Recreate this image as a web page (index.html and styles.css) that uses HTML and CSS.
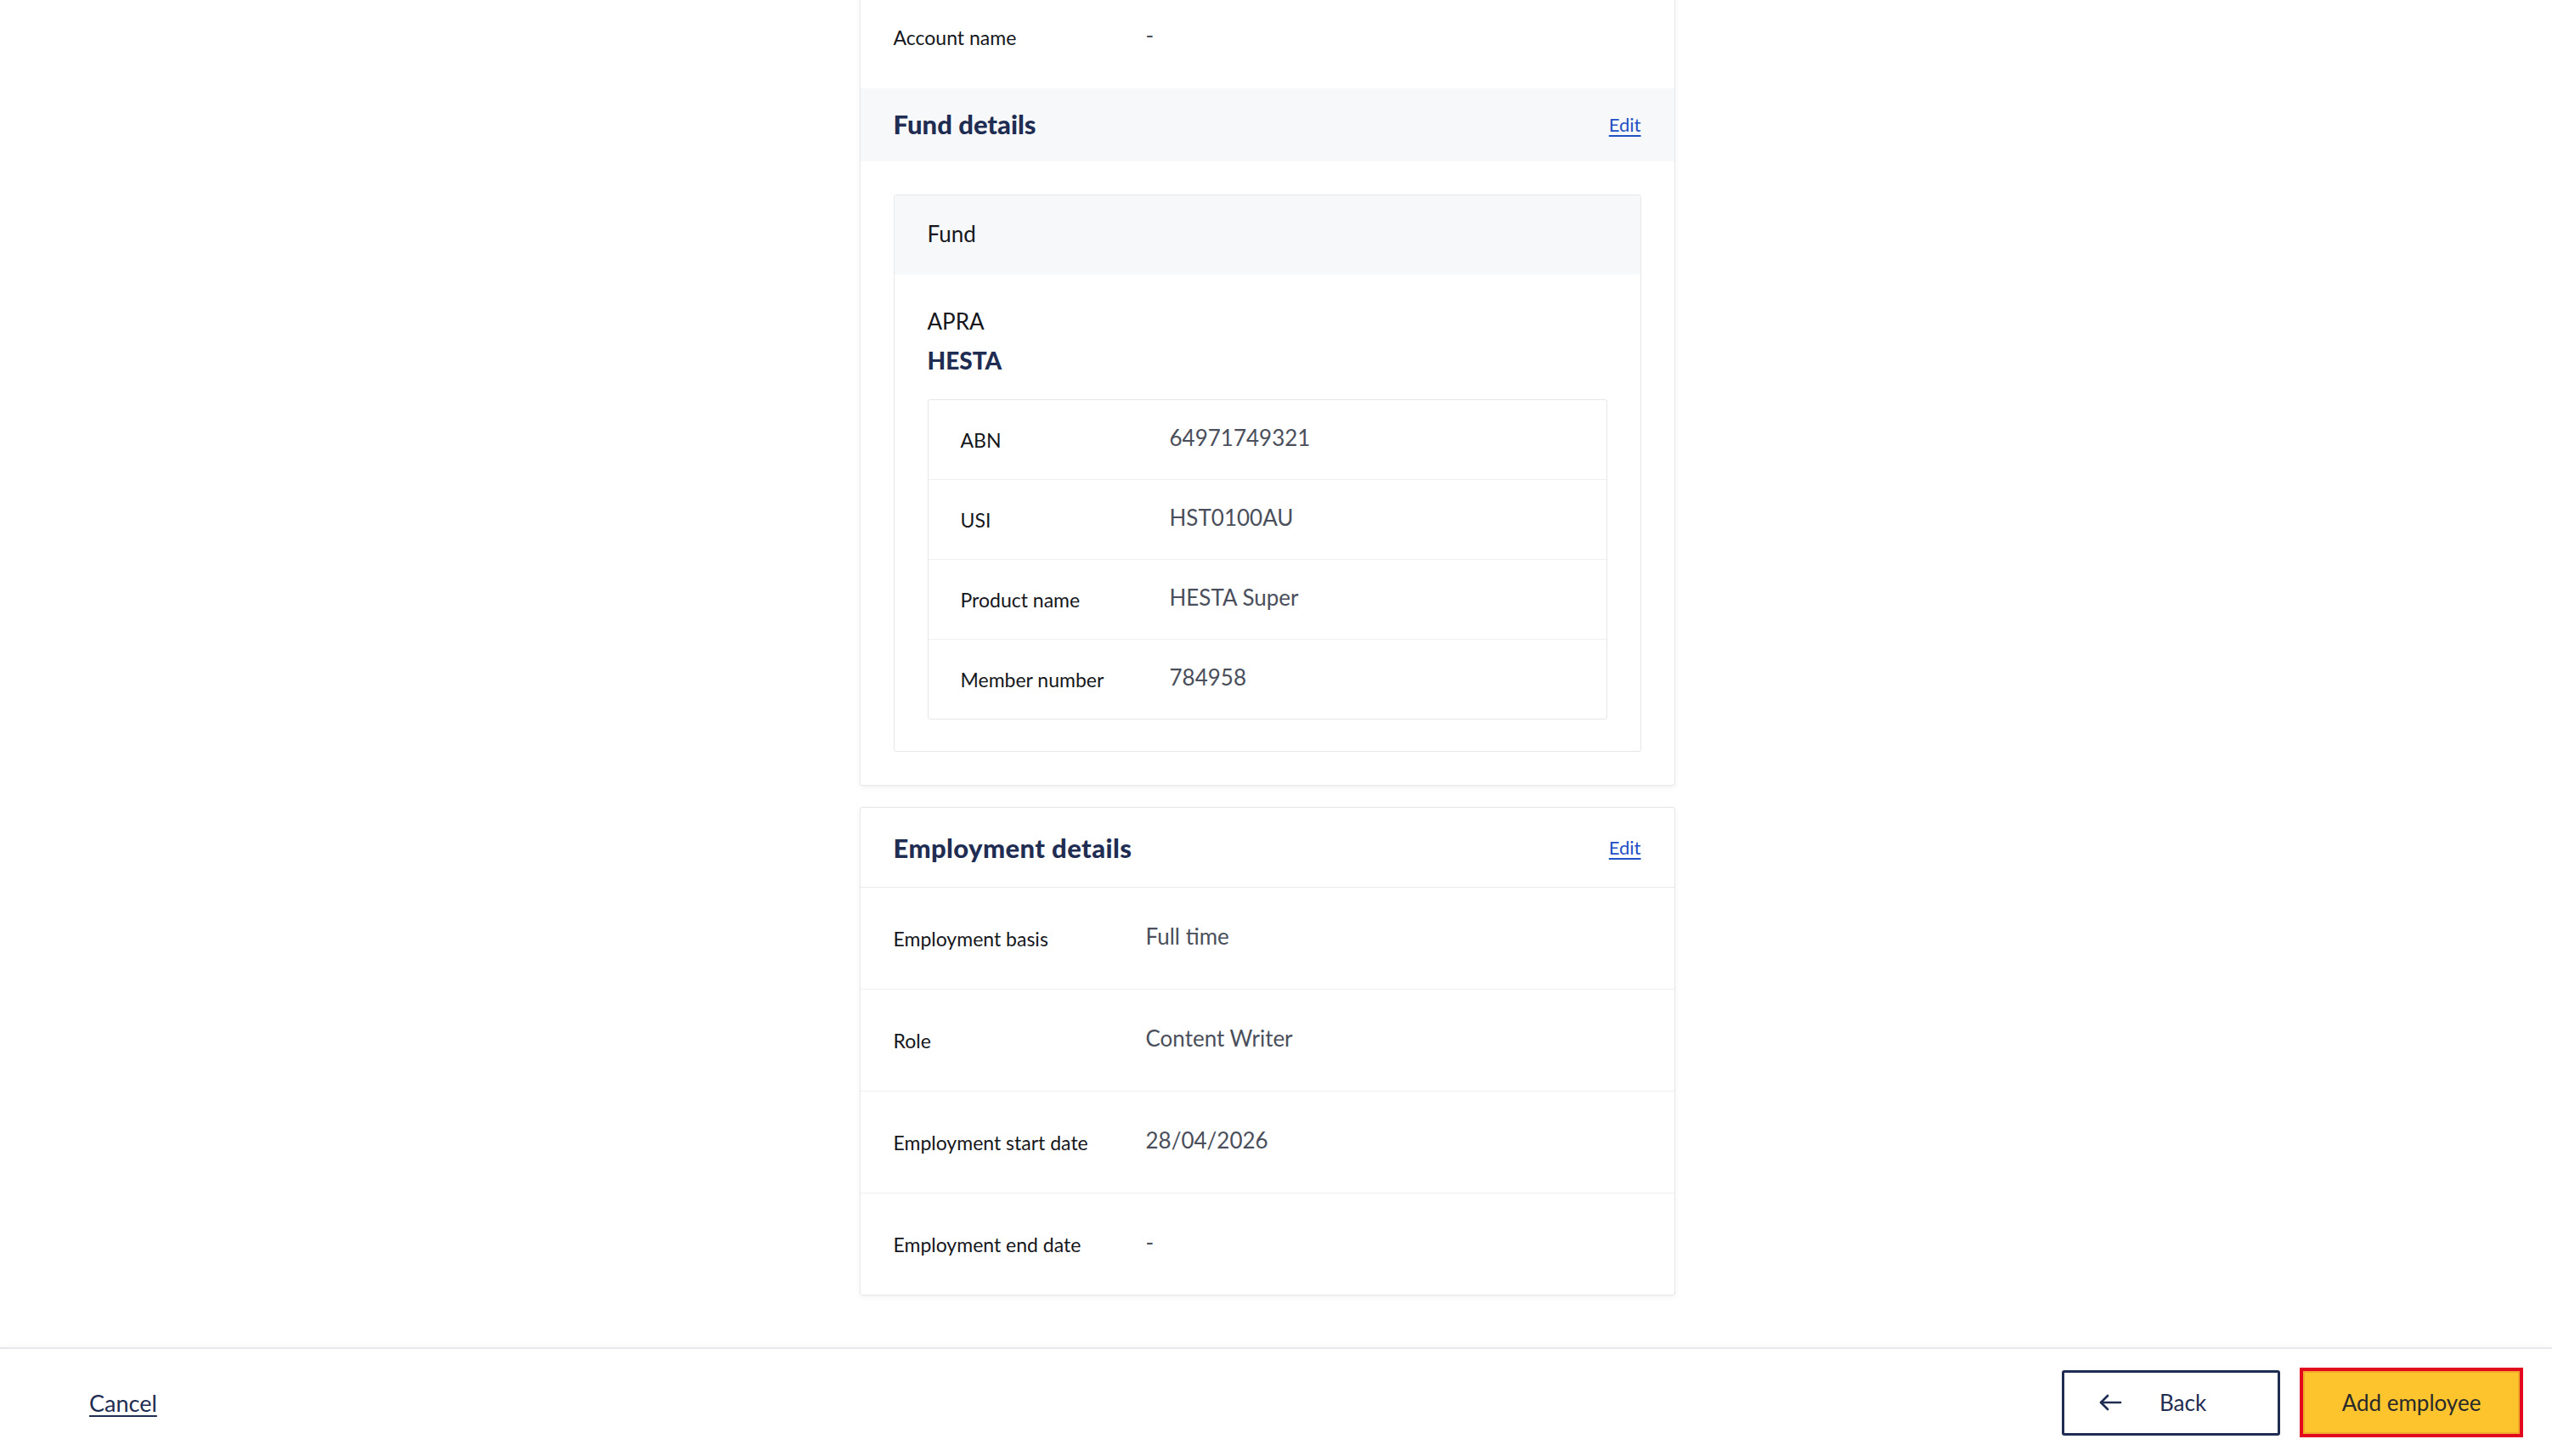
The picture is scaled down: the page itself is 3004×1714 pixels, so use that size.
FILE: index.html
```html
<!DOCTYPE html>
<html lang="en">
<head>
<meta charset="utf-8">
<title>Review employee</title>
<link rel="stylesheet" href="styles.css">
</head>
<body>
<div class="page">
  <main class="main">
    <div class="content">
      <section class="card card-first">
        <div class="row">
          <div class="label">Account name</div>
          <div class="value">-</div>
        </div>
        <div class="section-head shaded">
          <h2 class="title">Fund details</h2>
          <a class="edit" href="#">Edit</a>
        </div>
        <div class="card-body">
          <div class="fund">
            <div class="fund-head">Fund</div>
            <div class="fund-body">
              <div class="fund-type">APRA</div>
              <div class="fund-name">HESTA</div>
              <div class="fund-table">
                <div class="trow"><div class="tlabel">ABN</div><div class="tvalue">64971749321</div></div>
                <div class="trow"><div class="tlabel">USI</div><div class="tvalue">HST0100AU</div></div>
                <div class="trow"><div class="tlabel">Product name</div><div class="tvalue">HESTA Super</div></div>
                <div class="trow"><div class="tlabel">Member number</div><div class="tvalue">784958</div></div>
              </div>
            </div>
          </div>
        </div>
      </section>

      <section class="card card-second">
        <div class="section-head bordered">
          <h2 class="title">Employment details</h2>
          <a class="edit" href="#">Edit</a>
        </div>
        <div class="row row-line">
          <div class="label">Employment basis</div>
          <div class="value">Full time</div>
        </div>
        <div class="row row-line">
          <div class="label">Role</div>
          <div class="value">Content Writer</div>
        </div>
        <div class="row row-line">
          <div class="label">Employment start date</div>
          <div class="value">28/04/2026</div>
        </div>
        <div class="row row-line last">
          <div class="label">Employment end date</div>
          <div class="value">-</div>
        </div>
      </section>
    </div>
  </main>
  <footer class="footer">
    <a class="cancel" href="#">Cancel</a>
    <div class="actions">
      <button class="btn btn-back" type="button">
        <svg class="arrow" width="28" height="22" viewBox="0 0 28 22" fill="none" stroke="#1f2d52" stroke-width="2.6" stroke-linecap="round" stroke-linejoin="round"><path d="M26 11H3"/><path d="M11 3L3 11l8 8"/></svg>
        <span>Back</span>
      </button>
      <button class="btn btn-primary" type="button">Add employee</button>
    </div>
  </footer>
</div>
</body>
</html>
```

FILE: styles.css
```css
html, body {
  margin: 0;
  padding: 0;
  background: #ffffff;
}

body {
  font-family: Lato, "Open Sans", "Liberation Sans", sans-serif;
  color: #1d1f24;
}

.page {
  height: 1714px;
  display: flex;
  flex-direction: column;
  overflow: hidden;
}

.main {
  flex: 1;
  min-height: 0;
  overflow: hidden;
  padding-right: 21px;
}

.content {
  width: 960px;
  margin: -17px auto 0;
}

.card {
  box-sizing: border-box;
  width: 960px;
  background: #fff;
  border: 1px solid #e6e7ea;
  border-radius: 3px;
  box-shadow: 0 2px 6px rgba(0, 0, 0, 0.06);
}

.card-second {
  margin-top: 25px;
}

.row {
  box-sizing: border-box;
  height: 120px;
  display: flex;
  align-items: center;
  padding: 0 39px;
}

.row-line {
  height: 120px;
  border-bottom: 1px solid #eeeff1;
}

.row-line.last {
  border-bottom: none;
  height: 119px;
}

.label {
  width: 297px;
  flex: none;
  font-size: 23px;
  color: #15171c;
}

.value {
  font-size: 26px;
  color: #4a4f5b;
  margin-bottom: 6px;
}

.section-head {
  box-sizing: border-box;
  display: flex;
  align-items: center;
  justify-content: space-between;
  padding: 0 39px;
}

.section-head.shaded {
  height: 86px;
  background: #f7f8fa;
  padding-bottom: 2px;
}

.section-head.bordered {
  height: 94px;
  border-bottom: 1px solid #e8e9ec;
}

.title {
  margin: 0;
  font-size: 31px;
  font-weight: 900;
  color: #1f2d52;
}

.card-second .title {
  letter-spacing: 0.4px;
}

.edit {
  font-size: 22px;
  color: #2350c4;
  text-decoration: underline;
  text-underline-offset: 4px;
  text-decoration-thickness: 2px;
}

.card-body {
  padding: 39px 39px 39px;
}

.fund {
  border: 1px solid #e6e7ea;
  border-radius: 3px;
}

.fund-head {
  box-sizing: border-box;
  height: 93px;
  display: flex;
  align-items: center;
  padding: 0 39px 4px;
  background: #f7f8fa;
  font-size: 26px;
  color: #15171c;
}

.fund-body {
  padding: 32px 39px 37px;
}

.fund-type {
  height: 46px;
  line-height: 46px;
  font-size: 26px;
  color: #15171c;
}

.fund-name {
  height: 46px;
  line-height: 46px;
  font-size: 28px;
  font-weight: 900;
  color: #1f2d52;
  margin-bottom: 23px;
}

.fund-table {
  border: 1px solid #e6e7ea;
  border-radius: 3px;
}

.trow {
  box-sizing: border-box;
  height: 94px;
  display: flex;
  align-items: center;
  padding: 0 38px;
  border-bottom: 1px solid #eeeff1;
}

.trow:last-child {
  border-bottom: none;
  height: 93px;
}

.tlabel {
  width: 246px;
  flex: none;
  font-size: 23px;
  color: #15171c;
}

.tvalue {
  font-size: 26px;
  color: #4a4f5b;
  margin-bottom: 6px;
}

.footer {
  box-sizing: border-box;
  height: 128px;
  flex: none;
  border-top: 2px solid #e6e7ea;
  box-shadow: 0 -2px 6px rgba(0, 0, 0, 0.03);
  display: flex;
  align-items: center;
  justify-content: space-between;
  padding: 0 38px 0 105px;
  background: #fff;
}

.cancel {
  font-size: 27px;
  color: #1f2d52;
  text-decoration: underline;
  text-underline-offset: 4px;
  text-decoration-thickness: 2px;
}

.actions {
  display: flex;
  align-items: center;
  gap: 27px;
}

.btn {
  box-sizing: border-box;
  height: 77px;
  font-family: inherit;
  font-size: 26px;
  border-radius: 3px;
  display: flex;
  align-items: center;
  cursor: pointer;
}

.btn-back {
  width: 257px;
  background: #fff;
  border: 3px solid #1f2d52;
  color: #1f2d52;
  justify-content: flex-start;
  gap: 44px;
  padding: 0 0 0 40px;
}

.arrow {
  display: block;
}

.btn-primary {
  width: 255px;
  height: 74px;
  justify-content: center;
  background: #fdc42d;
  border: 2px solid #f1a92a;
  border-radius: 0;
  color: #2a2a2a;
  outline: 4px solid #e2091f;
  outline-offset: 0;
}
```
